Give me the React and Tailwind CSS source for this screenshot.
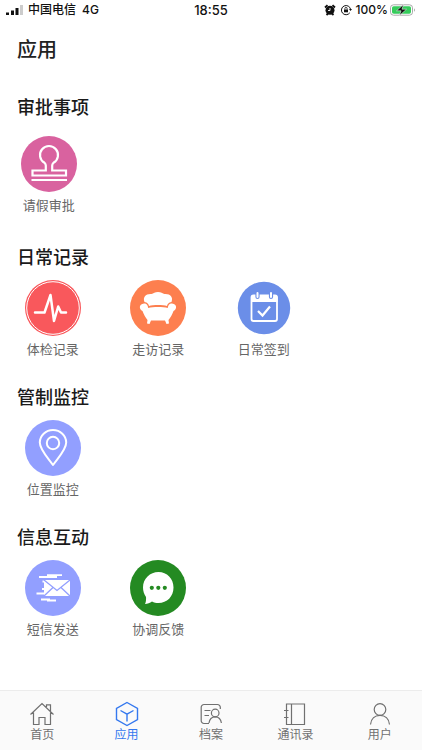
import React from "react";

function StampIcon() {
  return (
    <svg viewBox="0 0 56 56" className="size-14" fill="none" stroke="#fff" strokeWidth="2.200" aria-hidden="true">
      <circle cx="28" cy="28" r="28" fill="#d9629f" stroke="none" />
      <path d="M24.800 34.500V29.500Q24.800 28 23.500 26.800A9 9 0 1 1 32.500 26.800Q31.200 28 31.200 29.500V34.500H45V39.500H11.500V34.500Z" />
      <path d="M10.500 44H46" strokeWidth="1.800" />
    </svg>
  );
}

function PulseIcon() {
  return (
    <svg viewBox="0 0 56 56" className="size-14" fill="none" aria-hidden="true">
      <circle cx="28" cy="28" r="28" fill="#f9585c" />
      <circle cx="28" cy="28" r="26.300" stroke="#fff" strokeWidth="1" />
      <path d="M10 32.500H19.500L25.500 15L29 41L33.200 26.500L36 32.500H41" stroke="#fff" strokeWidth="2.500" strokeLinecap="round" strokeLinejoin="round" />
    </svg>
  );
}

function SofaIcon() {
  return (
    <svg viewBox="0 0 56 56" className="size-14" fill="#fff" aria-hidden="true">
      <circle cx="28" cy="28" r="28" fill="#fd7f4f" />
      <path d="M14.500 22C12.500 17 16 13.500 21.500 14C23.500 13.500 25 12 28 12C31 12 32.500 13.500 34.500 14C40 13.500 43.500 17 41.500 22C38.500 22.500 37.500 24 37 26C33 24.800 23 24.800 19 26C18.500 24 17.500 22.500 14.500 22Z" />
      <path d="M14 23.500C17 23.500 17.800 25.500 18.200 28C23 26.800 33 26.800 37.800 28C38.200 25.500 39 23.500 42 23.500C47.500 24 47 29.500 43.500 31C42.500 34 40.500 37.500 38.500 40L39 43.500L36.500 44L35 40.500H21L19.500 44L17 43.500L17.500 40C15.500 37.500 13.500 34 12.500 31C9 29.500 8.500 24 14 23.500Z" />
    </svg>
  );
}

function CalendarIcon() {
  return (
    <svg viewBox="0 0 56 56" className="size-14" fill="none" aria-hidden="true">
      <circle cx="28" cy="28" r="26.200" fill="#6b8ee8" />
      <rect x="15.500" y="15.500" width="25.500" height="25.500" rx="2" stroke="#fff" strokeWidth="1.800" />
      <path d="M15 17.500a2.500 2.500 0 0 1 2.500-2.500H39a2.500 2.500 0 0 1 2.500 2.500V22H15Z" fill="#fff" />
      <path d="M21.500 13V17M35 13V17" stroke="#6b8ee8" strokeWidth="4.200" strokeLinecap="round" />
      <path d="M21.500 13V17M35 13V17" stroke="#fff" strokeWidth="2" strokeLinecap="round" />
      <path d="M22 31L26.500 35.500L34 26.500" stroke="#fff" strokeWidth="2.200" />
    </svg>
  );
}

function PinIcon() {
  return (
    <svg viewBox="0 0 56 56" className="size-14" fill="none" stroke="#fff" strokeWidth="2" aria-hidden="true">
      <circle cx="28" cy="28" r="28" fill="#929fff" stroke="none" />
      <path d="M28 45C24 39 14.800 30 14.800 22.500A13.200 12.500 0 0 1 41.200 22.500C41.200 30 32 39 28 45Z" strokeLinejoin="round" />
      <circle cx="28" cy="23" r="6.200" />
    </svg>
  );
}

function MailIcon() {
  return (
    <svg viewBox="0 0 56 56" className="size-14" fill="none" aria-hidden="true">
      <circle cx="28" cy="28" r="28" fill="#929fff" />
      <path d="M14 17H32M22 15.200H37M17.500 21.500H25M17 29H22M11.500 33.500H21M16 39.500H25M22 40.500H31" stroke="#fff" strokeWidth="1.800" />
      <path d="M19 20H45V36H19Z" fill="#fff" />
      <path d="M19 20L32 30.500L45 20M19 36L28 27.500M45 36L36 27.500" stroke="#929fff" strokeWidth="1.300" />
    </svg>
  );
}

function ChatIcon() {
  return (
    <svg viewBox="0 0 56 56" className="size-14" aria-hidden="true">
      <circle cx="28" cy="28" r="28" fill="#248a22" />
      <path d="M28.500 12C37 12 43.500 18.500 43.500 27.500S37 43 28.500 43C26 43 24 42.500 22 41.500C20 43 17.500 44 15 44C16 42 16.200 39.500 16 37C14 34 13 31 13 27.500C13 18.500 20 12 28.500 12Z" fill="#fff" />
      <g fill="#248a22">
        <circle cx="21.800" cy="27.800" r="2.100" />
        <circle cx="28.300" cy="27.800" r="2.100" />
        <circle cx="34.800" cy="27.800" r="2.100" />
      </g>
    </svg>
  );
}

const sections = [
  { title: "审批事项", first: true, items: [["请假审批", StampIcon]] },
  { title: "日常记录", items: [["体检记录", PulseIcon], ["走访记录", SofaIcon], ["日常签到", CalendarIcon]] },
  { title: "管制监控", items: [["位置监控", PinIcon]] },
  { title: "信息互动", items: [["短信发送", MailIcon], ["协调反馈", ChatIcon]] },
];

function TabIcon({ children }) {
  return (
    <svg viewBox="0 0 26 26" className="size-[26px]" fill="none" stroke="currentColor" strokeWidth="1.200" aria-hidden="true">
      {children}
    </svg>
  );
}

const tabs = [
  {
    label: "首页",
    icon: <path d="M1.500 13.500L13 2.500L24.500 13.500M4.500 11.500V23.500H10V16.500H16V23.500H21.500V11.500M17.500 6V3.800H21.500V10" />,
  },
  {
    label: "应用",
    active: true,
    icon: <path d="M13 1.500L23.500 7.300V18.700L13 24.500L2.500 18.700V7.300ZM6.500 9.500L13 13.200L19.500 9.500M13 13.200V20.500" strokeWidth="1.400" />,
  },
  {
    label: "档案",
    icon: (
      <>
        <path d="M11 22.500H6A2.800 2.800 0 0 1 3.200 19.700V6.300A2.800 2.800 0 0 1 6 3.500H19.500A2.800 2.800 0 0 1 22.300 6.300V8M6.500 9.500H12.500M6.500 14.500H11" />
        <circle cx="17.200" cy="12" r="3.800" />
        <path d="M11 22C11.500 18.300 13.500 15.800 17.200 15.800S22.900 18.300 23.400 22" />
      </>
    ),
  },
  {
    label: "通讯录",
    icon: <path d="M4.500 3H22.500V23.500H4.500ZM9.500 3V23.500M2 9.500H6.500M2 16.500H6.500" />,
  },
  {
    label: "用户",
    icon: (
      <>
        <circle cx="13" cy="8.500" r="5.800" />
        <path d="M3.500 23.500C4 17.500 8 14.300 13 14.300S22 17.500 22.500 23.500" />
      </>
    ),
  },
];

function StatusBar() {
  return (
    <header className="grid h-5 grid-cols-[1fr_auto_1fr] items-center px-1.5 text-xs leading-5 font-medium text-[#111]">
      <div className="flex items-center">
        <svg viewBox="0 0 18 12" className="mr-1 h-3 w-[18px]" aria-hidden="true">
          <path d="M0 8.500h3V11H0ZM5 6.500h3V11H5ZM9.500 4h3V11h-3Z" fill="#111" />
          <path d="M14 1h3v10h-3Z" fill="#ccc" />
        </svg>
        <span>中国电信</span>
        <span className="ml-1.5">4G</span>
      </div>
      <span className="text-[13px] leading-5">18:55</span>
      <div className="flex items-center justify-end">
        <svg viewBox="0 0 12 12" className="size-3" aria-hidden="true">
          <circle cx="6" cy="6.300" r="4.500" fill="#111" />
          <path d="M1 3.500L3.500 1.200M11 3.500L8.500 1.200M2.500 11L4 9.500M9.500 11L8 9.500" stroke="#111" strokeWidth="1.800" />
          <path d="M6 4V6.500H4" stroke="#fff" fill="none" strokeWidth="0.900" />
        </svg>
        <svg viewBox="0 0 12 12" className="mx-1 size-3" fill="none" stroke="#111" aria-hidden="true">
          <path d="M9.800 8.800A4.600 4.600 0 1 1 10.600 5.500" />
          <path d="M9 5H12L10.500 7Z" fill="#111" stroke="none" />
          <path d="M4 5.500H8V8.300H4Z" fill="#111" stroke="none" />
          <path d="M4.900 5.500V4.500A1.100 1.100 0 0 1 7.100 4.500V5.500" strokeWidth="0.800" />
        </svg>
        <span>100%</span>
        <svg viewBox="0 0 26 12" className="ml-0.5 h-3 w-[26px]" aria-hidden="true">
          <rect x="0.500" y="0.800" width="22" height="10.400" rx="3" fill="#fff" stroke="#aaa" />
          <rect x="2" y="2.300" width="19" height="7.400" rx="1.700" fill="#35cc5b" />
          <path d="M24 4.200Q26 6 24 7.800Z" fill="#aaa" />
          <path d="M13.500 0.500L6.500 6.800H11L9.500 11.500L16.500 5.200H12Z" fill="#111" stroke="#fff" strokeWidth="0.500" />
        </svg>
      </div>
    </header>
  );
}

export default function App() {
  return (
    <div className="flex min-h-screen flex-col bg-white font-[Inter,'Noto_Sans_CJK_SC',sans-serif]">
      <StatusBar />
      <main className="flex-1">
        <h1 className="mt-4 px-[17px] text-xl leading-7 font-medium text-[#222]">应用</h1>
        <div className="mt-[30px] flex flex-col gap-[25px]">
          {sections.map(({ title, first, items }) => (
            <section key={title} className={first ? "pb-1" : ""}>
              <h2 className="px-[17px] text-lg leading-7 font-medium text-[#1a1a1a]">{title}</h2>
              <div className={first ? "mt-3.5 grid grid-cols-4 pr-8" : "mt-2 grid grid-cols-4"}>
                {items.map(([label, Icon]) => (
                  <button key={label} type="button" className="flex flex-col items-center gap-[3px] text-[13px] leading-5 text-[#666]">
                    <Icon />
                    <span>{label}</span>
                  </button>
                ))}
              </div>
            </section>
          ))}
        </div>
      </main>
      <nav className="grid h-[60px] grid-cols-5 border-t border-[#ececec] bg-[#fafafa]">
        {tabs.map(({ label, icon, active }) => (
          <a
            key={label}
            href="#"
            aria-current={active ? "page" : undefined}
            className={`flex flex-col items-center pt-2.5 text-xs leading-4 ${active ? "text-[#3478ef]" : "text-[#707070]"}`}
          >
            <TabIcon>{icon}</TabIcon>
            <span>{label}</span>
          </a>
        ))}
      </nav>
    </div>
  );
}
